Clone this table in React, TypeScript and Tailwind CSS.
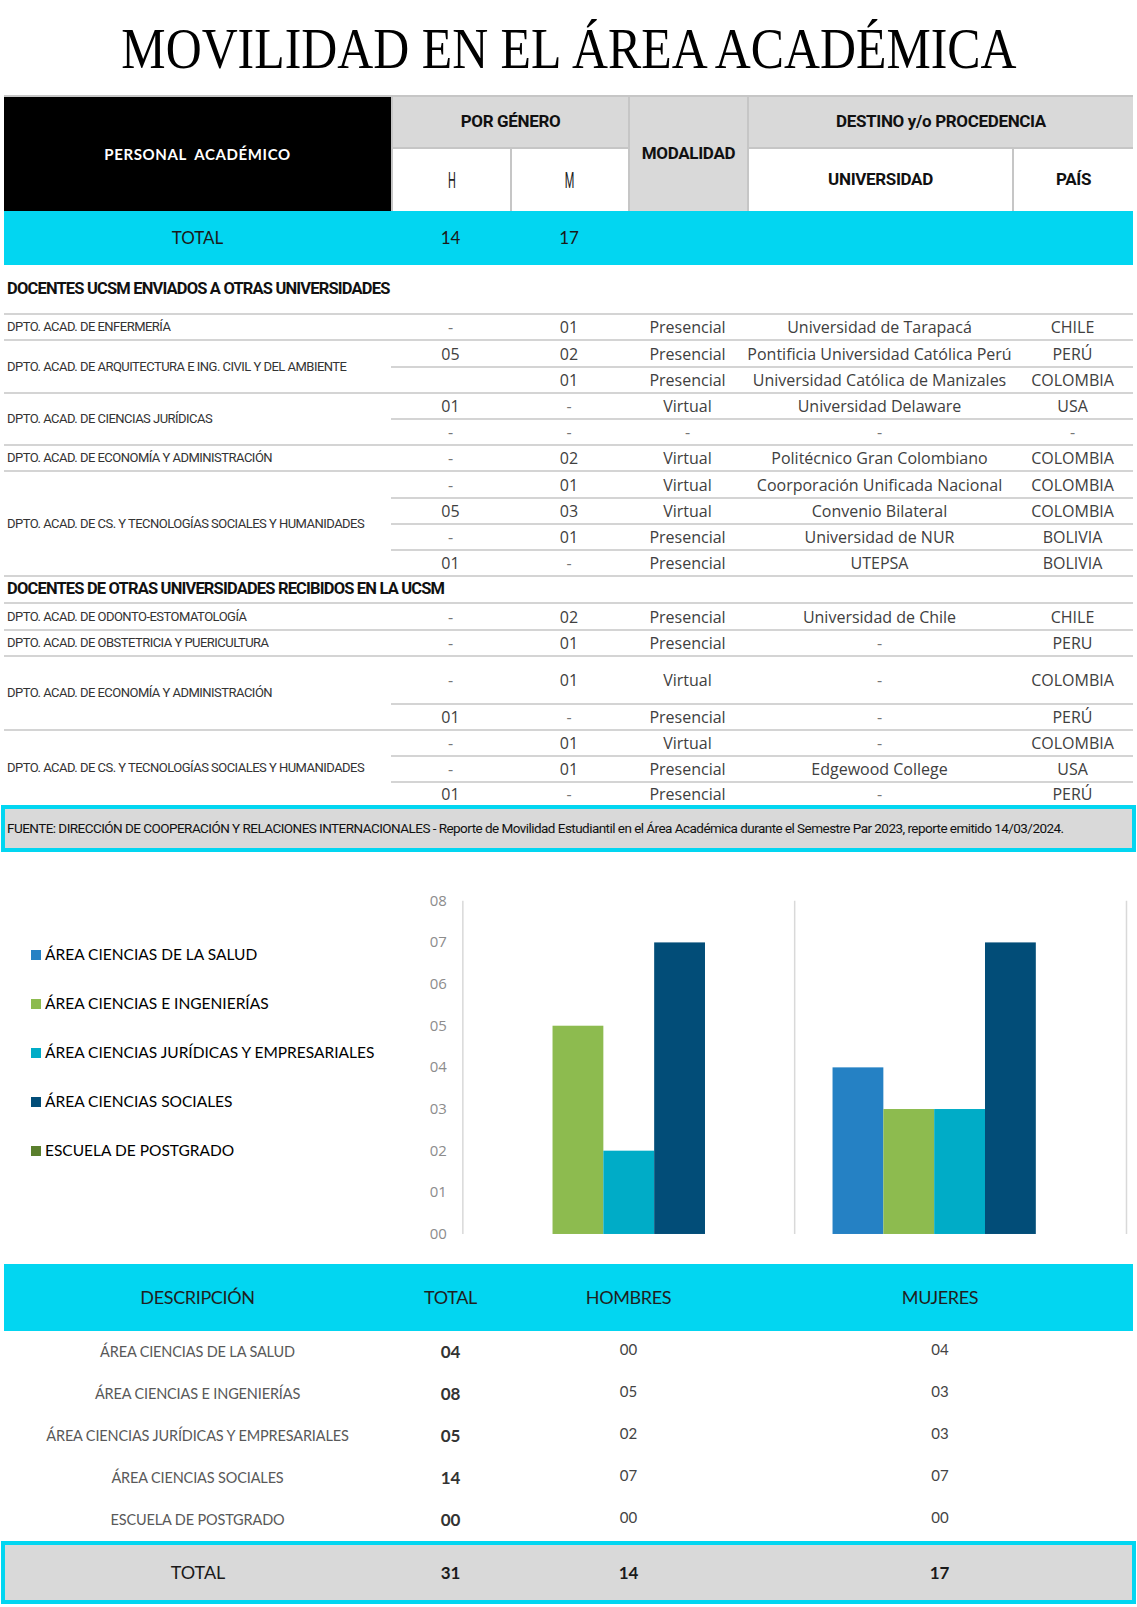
import React from "react";

type Row = { h: string; m: string; mod: string; uni: string; pais: string; ht: string };
type Group = { label: string; rows: Row[] };

const CYAN = "bg-[#02d6f1]";
const VAL = "font-['Open_Sans',sans-serif] text-[16px] text-[#404040] text-center leading-none";
const LBL = "font-['Roboto',sans-serif] text-[13px] text-[#333] tracking-[-0.04em] uppercase";
const GOTH = "font-['Lato',sans-serif]";
const HEAD = "font-['Roboto',sans-serif] font-bold text-[17px] text-[#111] tracking-[-0.02em]";

const SENT: Group[] = [
  { label: "DPTO. ACAD. DE ENFERMERÍA", rows: [
    { h: "-", m: "01", mod: "Presencial", uni: "Universidad de Tarapacá", pais: "CHILE", ht: "h-[26px]" },
  ] },
  { label: "DPTO. ACAD. DE ARQUITECTURA E ING. CIVIL Y DEL AMBIENTE", rows: [
    { h: "05", m: "02", mod: "Presencial", uni: "Pontificia Universidad Católica Perú", pais: "PERÚ", ht: "h-[27px]" },
    { h: "", m: "01", mod: "Presencial", uni: "Universidad Católica de Manizales", pais: "COLOMBIA", ht: "h-[26px]" },
  ] },
  { label: "DPTO. ACAD. DE CIENCIAS JURÍDICAS", rows: [
    { h: "01", m: "-", mod: "Virtual", uni: "Universidad Delaware", pais: "USA", ht: "h-[26px]" },
    { h: "-", m: "-", mod: "-", uni: "-", pais: "-", ht: "h-[26px]" },
  ] },
  { label: "DPTO. ACAD. DE ECONOMÍA Y ADMINISTRACIÓN", rows: [
    { h: "-", m: "02", mod: "Virtual", uni: "Politécnico Gran Colombiano", pais: "COLOMBIA", ht: "h-[26px]" },
  ] },
  { label: "DPTO. ACAD. DE CS. Y TECNOLOGÍAS SOCIALES Y HUMANIDADES", rows: [
    { h: "-", m: "01", mod: "Virtual", uni: "Coorporación Unificada Nacional", pais: "COLOMBIA", ht: "h-[27px]" },
    { h: "05", m: "03", mod: "Virtual", uni: "Convenio Bilateral", pais: "COLOMBIA", ht: "h-[26px]" },
    { h: "-", m: "01", mod: "Presencial", uni: "Universidad de NUR", pais: "BOLIVIA", ht: "h-[26px]" },
    { h: "01", m: "-", mod: "Presencial", uni: "UTEPSA", pais: "BOLIVIA", ht: "h-[26px]" },
  ] },
];

const RECEIVED: Group[] = [
  { label: "DPTO. ACAD. DE ODONTO-ESTOMATOLOGÍA", rows: [
    { h: "-", m: "02", mod: "Presencial", uni: "Universidad de Chile", pais: "CHILE", ht: "h-[27px]" },
  ] },
  { label: "DPTO. ACAD. DE OBSTETRICIA Y PUERICULTURA", rows: [
    { h: "-", m: "01", mod: "Presencial", uni: "-", pais: "PERU", ht: "h-[26px]" },
  ] },
  { label: "DPTO. ACAD. DE ECONOMÍA Y ADMINISTRACIÓN", rows: [
    { h: "-", m: "01", mod: "Virtual", uni: "-", pais: "COLOMBIA", ht: "h-[48px]" },
    { h: "01", m: "-", mod: "Presencial", uni: "-", pais: "PERÚ", ht: "h-[26px]" },
  ] },
  { label: "DPTO. ACAD. DE CS. Y TECNOLOGÍAS SOCIALES Y HUMANIDADES", rows: [
    { h: "-", m: "01", mod: "Virtual", uni: "-", pais: "COLOMBIA", ht: "h-[26px]" },
    { h: "-", m: "01", mod: "Presencial", uni: "Edgewood College", pais: "USA", ht: "h-[26px]" },
    { h: "01", m: "-", mod: "Presencial", uni: "-", pais: "PERÚ", ht: "h-[24px]" },
  ] },
];

const SERIES = [
  { name: "ÁREA CIENCIAS DE LA SALUD", color: "#2581c4", h: 0, m: 4 },
  { name: "ÁREA CIENCIAS E INGENIERÍAS", color: "#8dbb4f", h: 5, m: 3 },
  { name: "ÁREA CIENCIAS JURÍDICAS Y EMPRESARIALES", color: "#00acc7", h: 2, m: 3 },
  { name: "ÁREA CIENCIAS SOCIALES", color: "#024d78", h: 7, m: 7 },
  { name: "ESCUELA DE POSTGRADO", color: "#5a7f2d", h: 0, m: 0 },
];

const SUMMARY = [
  { d: "ÁREA CIENCIAS DE LA SALUD", t: "04", h: "00", m: "04" },
  { d: "ÁREA CIENCIAS E INGENIERÍAS", t: "08", h: "05", m: "03" },
  { d: "ÁREA CIENCIAS JURÍDICAS Y EMPRESARIALES", t: "05", h: "02", m: "03" },
  { d: "ÁREA CIENCIAS SOCIALES", t: "14", h: "07", m: "07" },
  { d: "ESCUELA DE POSTGRADO", t: "00", h: "00", m: "00" },
];

function Cell({ v }: { v: string }) {
  return <div className={v === "-" ? VAL + " !text-[#777]" : VAL}>{v}</div>;
}

function Block({ g }: { g: Group }) {
  return (
    <div className="flex">
      <div className={`w-[387px] flex items-center border-t-2 border-[#d4d4d4] pl-[3px] ${LBL}`}>{g.label}</div>
      <div className="flex-1">
        {g.rows.map((r, i) => (
          <div key={i} className={`grid grid-cols-[119px_118px_119px_265px_121px] items-center border-t-2 border-[#d4d4d4] ${r.ht}`}>
            <Cell v={r.h} />
            <Cell v={r.m} />
            <Cell v={r.mod} />
            <Cell v={r.uni} />
            <Cell v={r.pais} />
          </div>
        ))}
      </div>
    </div>
  );
}

function Chart() {
  const y = (v: number) => 382.6 - 41.8 * v;
  const ticks = [0, 1, 2, 3, 4, 5, 6, 7, 8];
  return (
    <svg width="717" height="412" viewBox="0 0 717 412">
      {ticks.map((t) => (
        <text key={t} x="28" y={y(t) + 5} textAnchor="end" fontSize="15" fill="#8c8c8c" fontFamily="Open Sans, sans-serif">
          {"0" + t}
        </text>
      ))}
      {[44, 377, 710].map((x) => (
        <line key={x} x1={x} x2={x} y1={y(8)} y2={y(0)} stroke="#d9d9d9" strokeWidth="1.5" />
      ))}
      {SERIES.map((s, i) => (
        <g key={s.name}>
          <rect x={83 + i * 51} y={y(s.h)} width="51" height={41.8 * s.h} fill={s.color} />
          <rect x={415 + i * 51} y={y(s.m)} width="51" height={41.8 * s.m} fill={s.color} />
        </g>
      ))}
    </svg>
  );
}

export default function App() {
  return (
    <div className="w-[1137px] h-[1607px] bg-white px-[4px] overflow-hidden">
      {/* title */}
      <div className="h-[95px] pt-[21px] text-center">
        <span className="inline-block scale-x-[0.89] font-['Liberation_Serif',serif] text-[56px] leading-none text-black">
          MOVILIDAD EN EL ÁREA ACADÉMICA
        </span>
      </div>

      {/* header */}
      <div className="grid grid-cols-[387px_117px_116px_117px_263px_119px] grid-rows-[50px_62px] gap-[2px] bg-[#c6c6c6] pt-[2px]">
        <div className={`row-span-2 bg-black flex items-center justify-center text-white font-bold text-[15px] tracking-[0.04em] ${GOTH}`}>
          PERSONAL&nbsp;&nbsp;ACADÉMICO
        </div>
        <div className={`col-span-2 bg-[#d9d9d9] flex items-center justify-center ${HEAD}`}>POR GÉNERO</div>
        <div className={`row-span-2 bg-[#d9d9d9] flex items-center justify-center ${HEAD}`}>MODALIDAD</div>
        <div className={`col-span-2 bg-[#d9d9d9] flex items-center justify-center ${HEAD}`}>DESTINO y/o PROCEDENCIA</div>
        <div className="bg-white flex items-center justify-center">
          <span className="inline-block scale-x-[0.5] font-['Roboto',sans-serif] text-[22px] text-[#222]">H</span>
        </div>
        <div className="bg-white flex items-center justify-center">
          <span className="inline-block scale-x-[0.5] font-['Roboto',sans-serif] text-[22px] text-[#222]">M</span>
        </div>
        <div className={`bg-white flex items-center justify-center ${HEAD}`}>UNIVERSIDAD</div>
        <div className={`bg-white flex items-center justify-center ${HEAD}`}>PAÍS</div>
      </div>
      <div className={`grid grid-cols-[387px_119px_118px_1fr] h-[54px] items-center ${CYAN} ${GOTH} text-[17px] text-[#1a1a1a]`}>
        <div className="text-center">TOTAL</div>
        <div className="text-center">14</div>
        <div className="text-center">17</div>
        <div />
      </div>

      {/* sent */}
      <div className="h-[48px] flex items-center pl-[3px] font-['Roboto',sans-serif] font-bold text-[16.5px] tracking-[-0.05em] text-[#111]">
        DOCENTES UCSM ENVIADOS A OTRAS UNIVERSIDADES
      </div>
      {SENT.map((g) => <Block key={g.label} g={g} />)}

      {/* received */}
      <div className="h-[27px] flex items-center border-t-2 border-[#d4d4d4] pl-[3px] font-['Roboto',sans-serif] font-bold text-[16.5px] tracking-[-0.05em] text-[#111]">
        DOCENTES DE OTRAS UNIVERSIDADES RECIBIDOS EN LA UCSM
      </div>
      {RECEIVED.map((g) => <Block key={g.label} g={g} />)}

      {/* source */}
      <div className="-mx-[3px] h-[47px] border-4 border-[#02d6f1] bg-[#d9d9d9] flex items-center pl-[2px] font-['Roboto',sans-serif] text-[13.5px] tracking-[-0.04em] text-[#111] whitespace-nowrap">
        FUENTE: DIRECCIÓN DE COOPERACIÓN Y RELACIONES INTERNACIONALES - Reporte de Movilidad Estudiantil en el Área Académica durante el Semestre Par 2023, reporte emitido 14/03/2024.
      </div>

      {/* chart */}
      <div className="h-[412px] flex">
        <div className="w-[416px] pt-[78px]">
          {SERIES.map((s) => (
            <div key={s.name} className="h-[49px] flex items-center gap-[4px] pl-[27px]">
              <span className="w-[10px] h-[10px]" style={{ background: s.color }} />
              <span className="font-['Lato',sans-serif] text-[15.5px] text-black">{s.name}</span>
            </div>
          ))}
        </div>
        <Chart />
      </div>

      {/* summary */}
      <div className={`grid grid-cols-[387px_119px_237px_1fr] h-[67px] items-center ${CYAN} ${GOTH} text-[18px] text-[#1f1f1f] tracking-[-0.02em]`}>
        <div className="text-center">DESCRIPCIÓN</div>
        <div className="text-center">TOTAL</div>
        <div className="text-center">HOMBRES</div>
        <div className="text-center">MUJERES</div>
      </div>
      {SUMMARY.map((r) => (
        <div key={r.d} className={`grid grid-cols-[387px_119px_237px_1fr] h-[42px] items-center ${GOTH}`}>
          <div className="text-center text-[14.5px] text-[#595959] tracking-[-0.01em]">{r.d}</div>
          <div className="text-center text-[17px] font-bold text-[#333]">{r.t}</div>
          <div className="text-center text-[15px] text-[#444] pb-[5px]">{r.h}</div>
          <div className="text-center text-[15px] text-[#444] pb-[5px]">{r.m}</div>
        </div>
      ))}
      <div className={`-mx-[3px] h-[63px] border-4 border-[#02d6f1] bg-[#d9d9d9] grid grid-cols-[386px_119px_237px_1fr] items-center ${GOTH} text-[18px] text-[#1a1a1a]`}>
        <div className="text-center">TOTAL</div>
        <div className="text-center font-bold text-[17px]">31</div>
        <div className="text-center font-bold text-[17px]">14</div>
        <div className="text-center font-bold text-[17px]">17</div>
      </div>
    </div>
  );
}
